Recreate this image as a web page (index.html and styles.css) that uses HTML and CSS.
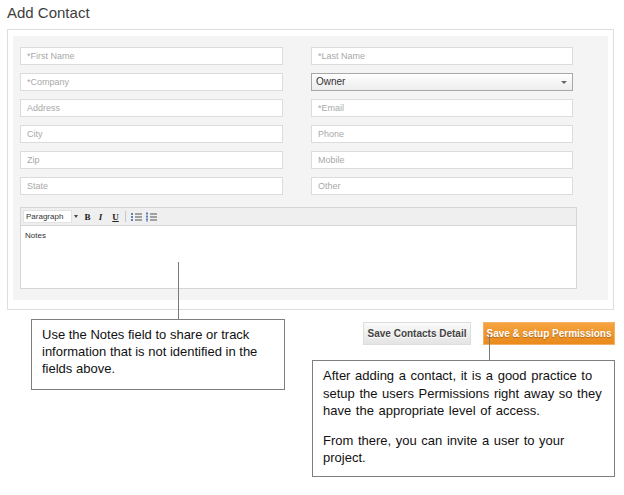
FILE: index.html
```html
<!DOCTYPE html>
<html>
<head>
<meta charset="utf-8">
<link rel="stylesheet" href="styles.css">
</head>
<body>
<div class="page">
  <h1 class="title">Add Contact</h1>
  <div class="panel">
    <div class="inner">
      <div class="fields">
        <div class="field">*First Name</div>
        <div class="field">*Last Name</div>
        <div class="field">*Company</div>
        <div class="field select">Owner<span class="caret"></span></div>
        <div class="field">Address</div>
        <div class="field">*Email</div>
        <div class="field">City</div>
        <div class="field">Phone</div>
        <div class="field">Zip</div>
        <div class="field">Mobile</div>
        <div class="field">State</div>
        <div class="field">Other</div>
      </div>
      <div class="editor">
        <div class="toolbar">
          <div class="format">Paragraph</div>
          <span class="drop"></span>
          <span class="tb b">B</span>
          <span class="tb i">I</span>
          <span class="tb u">U</span>
          <span class="sep"></span>
          <svg class="ico" width="11" height="10" viewBox="0 0 11 10"><g fill="#5a7fb8"><rect x="0" y="1" width="2" height="2"/><rect x="0" y="4" width="2" height="2"/><rect x="0" y="7" width="2" height="2"/></g><g fill="#555"><rect x="4" y="1.5" width="7" height="1"/><rect x="4" y="4.5" width="7" height="1"/><rect x="4" y="7.5" width="7" height="1"/></g></svg>
          <svg class="ico" width="11" height="10" viewBox="0 0 11 10"><g fill="#5a7fb8"><rect x="0.5" y="0" width="1" height="10"/><rect x="0" y="1" width="2" height="1"/><rect x="0" y="4" width="2" height="1.2"/><rect x="0" y="7" width="2" height="1.2"/></g><g fill="#555"><rect x="4" y="1.5" width="7" height="1"/><rect x="4" y="4.5" width="7" height="1"/><rect x="4" y="7.5" width="7" height="1"/></g></svg>
        </div>
        <div class="notes">Notes</div>
      </div>
    </div>
  </div>
  <div class="actions">
    <button class="btn grey">Save Contacts Detail</button>
    <button class="btn orange">Save &amp; setup Permissions</button>
  </div>

  <div class="line line1"></div>
  <div class="callout callout1">
    <p>Use the Notes field to share or track information that is not identified in the fields above.</p>
  </div>
  <div class="line line2"></div>
  <div class="callout callout2">
    <p>After adding a contact, it is a good practice to setup the users Permissions right away so they have the appropriate level of access.</p>
    <p>From there, you can invite a user to your project.</p>
  </div>
</div>
</body>
</html>
```
FILE: styles.css
```css
* { box-sizing: border-box; }
html, body { margin: 0; padding: 0; background: #fff; }
body { font-family: "Liberation Sans", Arial, sans-serif; width: 624px; height: 495px; overflow: hidden; }
.page { position: relative; padding: 4px 0 0 7px; }
.title { margin: 0 0 7px 0; font-size: 15px; font-weight: normal; color: #404040; line-height: 18px; }
.panel { width: 607px; height: 281px; border: 1px solid #dedede; padding: 6px 5px 9px 5px; }
.inner { background: #f5f4f4; height: 100%; padding: 11px 0 0 7px; }
.fields { display: grid; grid-template-columns: 263px 262px; column-gap: 28px; row-gap: 8px; }
.field { height: 18px; border: 1px solid #dcdcdc; background: #fff; font-size: 9px; color: #a9a9a9; line-height: 16px; padding-left: 6px; }
.field.select { position: relative; border-color: #a8a8a8; background: linear-gradient(#ffffff, #ececec); color: #333; font-size: 10px; padding-left: 4px; }
.caret { position: absolute; right: 5px; top: 7px; width: 0; height: 0; border-left: 3px solid transparent; border-right: 3px solid transparent; border-top: 3px solid #666; }
.editor { margin-top: 12px; width: 557px; height: 82px; border: 1px solid #d6d6d6; background: #fff; }
.toolbar { height: 18px; background: #efefef; border-bottom: 1px solid #d6d6d6; display: flex; align-items: center; padding-left: 2px; }
.format { width: 49px; height: 13px; background: #fff; border: 1px solid #e2e2e2; font-size: 8px; line-height: 11px; color: #333; padding-left: 2px; }
.drop { width: 0; height: 0; border-left: 2px solid transparent; border-right: 2px solid transparent; border-top: 3px solid #444; margin: 0 3px 0 2px; }
.tb { font-family: "Liberation Serif", serif; font-weight: bold; font-size: 9px; color: #222; width: 13px; text-align: center; }
.tb.i { font-style: italic; }
.tb.u { text-decoration: underline; margin-left: 2px; }
.sep { width: 1px; height: 11px; background: #c8c8c8; margin: 0 5px 0 3px; }
.ico { margin-right: 4px; }
.notes { font-size: 8px; color: #333; padding: 5px 0 0 4px; }
.actions { display: flex; justify-content: flex-end; gap: 12px; width: 608px; margin-top: 12px; }
.btn { height: 23px; font-family: "Liberation Sans", Arial, sans-serif; font-size: 10px; font-weight: bold; padding: 0; cursor: pointer; }
.btn.grey { width: 108px; border: 1px solid #dddddd; background: linear-gradient(#fafafa, #e4e4e4); color: #444; text-shadow: 0 1px 0 #fff; }
.btn.orange { width: 132px; border: 1px solid #f3b068; background: linear-gradient(#f6a33f, #e98a1c); color: #fff; text-shadow: 0 1px 1px rgba(120,60,0,0.5); }
.line { position: absolute; width: 1px; background: #7a7a7a; }
.line1 { left: 178px; top: 262px; height: 57px; }
.line2 { left: 489px; top: 335px; height: 25px; }
.callout { position: absolute; border: 1px solid #7f7f7f; background: #fff; font-size: 13px; color: #111; }
.callout p { margin: 0; }
.callout1 { left: 31px; top: 319px; width: 254px; height: 71px; padding: 6px 0 0 10px; line-height: 17px; }
.callout2 { left: 312px; top: 360px; width: 303px; height: 117px; padding: 6px 6px 0 10px; line-height: 17.5px; word-spacing: 1px; }
.callout2 p + p { margin-top: 12px; }
```
